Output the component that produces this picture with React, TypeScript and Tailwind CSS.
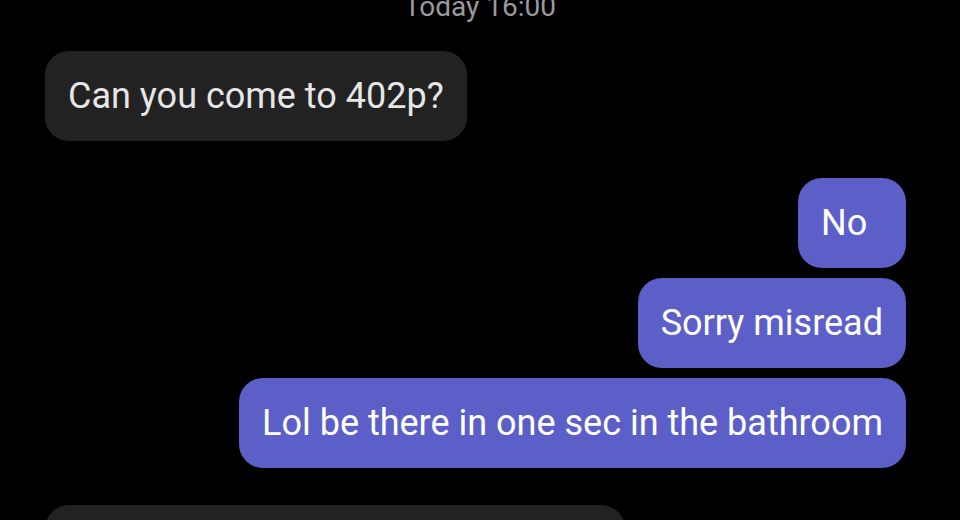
export default function App() {
  const sent = ['No', 'Sorry misread', 'Lol be there in one sec in the bathroom'];

  return (
    <div className="h-[520px] w-[960px] overflow-hidden bg-black font-['Roboto',sans-serif]">
      <div className="mt-[-9px] text-center text-[28px] leading-[32px] text-[#9a9a9a]">Today 16:00</div>

      <div className="mt-[28px] flex flex-col px-[45px]">
        <div className="flex">
          <div className="flex h-[90px] items-center rounded-[24px] bg-[#222222] px-[23px] text-[36px] text-[#e6e6e6]">
            Can you come to 402p?
          </div>
        </div>

        <div className="mt-[37px] flex flex-col items-end gap-[10px] pr-[9px]">
          {sent.map((m) => (
            <div
              key={m}
              className="flex h-[90px] min-w-[108px] items-center rounded-[24px] bg-[#5c5fc8] px-[23px] text-[36px] text-white"
            >
              {m}
            </div>
          ))}
        </div>

        <div className="mt-[37px] flex">
          <div className="h-[90px] w-[580px] rounded-[24px] bg-[#222222]" />
        </div>
      </div>
    </div>
  );
}
